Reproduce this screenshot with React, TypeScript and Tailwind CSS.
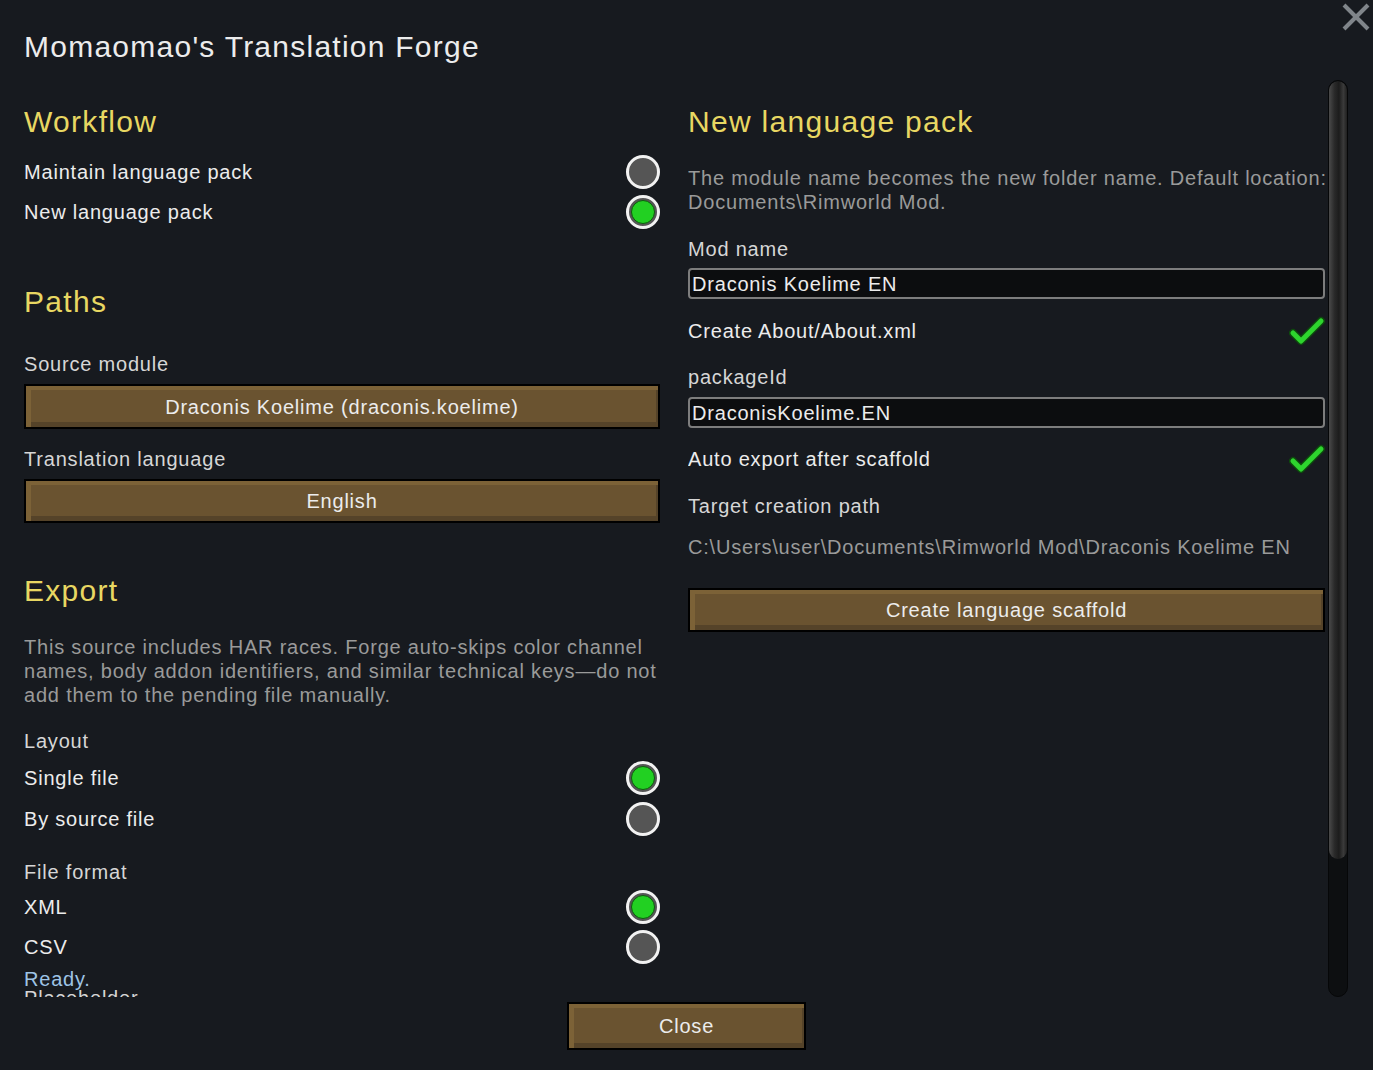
import React from "react";

const font = { fontFamily: '"Liberation Sans", Arial, sans-serif' };

function Radio({ on }: { on?: boolean }) {
  return (
    <div className="w-[34px] h-[34px] rounded-full border-[3px] border-[#f2f2f2] bg-[#555555] flex items-center justify-center shrink-0">
      {on && <div className="w-[24px] h-[24px] rounded-full bg-[#22d022] border border-[#0f5a0f]" />}
    </div>
  );
}

function Check() {
  return (
    <svg width="36" height="32" viewBox="0 0 36 32" className="shrink-0">
      <polyline points="4,18 12,26 32,6" fill="none" stroke="#0d4a0d" strokeWidth="8" strokeLinecap="round" strokeLinejoin="round" />
      <polyline points="4,18 12,26 32,6" fill="none" stroke="#2ed52e" strokeWidth="5" strokeLinecap="round" strokeLinejoin="round" />
    </svg>
  );
}

function WoodButton({ label, className = "" }: { label: string; className?: string }) {
  return (
    <div className={`shrink-0 border-2 border-black bg-[#6a5330] shadow-[inset_5px_4px_0_#7c6237,inset_-2px_-5px_0_#554329] flex items-center justify-center text-[20px] text-[#ececec] tracking-[0.8px] ${className}`}>
      {label}
    </div>
  );
}

function OptionRow({ label, on }: { label: string; on?: boolean }) {
  return (
    <div className="shrink-0 h-[40px] flex items-center justify-between text-[20px] text-[#ececec] tracking-[0.8px]">
      <span>{label}</span>
      <Radio on={on} />
    </div>
  );
}

function Heading({ children, className = "" }: { children: React.ReactNode; className?: string }) {
  return <div className={`shrink-0 h-[36px] leading-[36px] text-[30px] text-[#e8d762] tracking-[1.3px] ${className}`}>{children}</div>;
}

function Label({ children, className = "" }: { children: React.ReactNode; className?: string }) {
  return <div className={`shrink-0 h-[24px] leading-[24px] text-[20px] text-[#d6d6d6] tracking-[0.8px] ${className}`}>{children}</div>;
}

function TextInput({ value, className = "" }: { value: string; className?: string }) {
  return (
    <div className={`shrink-0 h-[31px] rounded-[4px] border-2 border-[#7d7d7d] bg-[#0c0d0f] flex items-center px-[2px] text-[20px] text-[#ececec] tracking-[0.8px] ${className}`}>
      {value}
    </div>
  );
}

export default function App() {
  return (
    <div className="w-[1373px] h-[1070px] bg-[#171a1f] relative overflow-hidden" style={font}>
      {/* close icon */}
      <svg className="absolute right-[2px] top-[2px]" width="30" height="30" viewBox="0 0 30 30">
        <line x1="3" y1="3" x2="27" y2="27" stroke="#80858a" strokeWidth="4" />
        <line x1="27" y1="3" x2="3" y2="27" stroke="#80858a" strokeWidth="4" />
      </svg>

      <div className="pl-[24px] pt-[29px] h-[80px] text-[30px] text-[#ececec] leading-[36px] tracking-[1.25px]">
        Momaomao's Translation Forge
      </div>

      <div className="flex h-[917px] pl-[24px]">
        {/* left column */}
        <div className="w-[636px] overflow-hidden flex flex-col pt-[24px]">
          <Heading>Workflow</Heading>
          <div className="mt-[12px] shrink-0">
            <OptionRow label="Maintain language pack" />
            <OptionRow label="New language pack" on />
          </div>

          <Heading className="mt-[52px]">Paths</Heading>
          <Label className="mt-[32px]">Source module</Label>
          <WoodButton label="Draconis Koelime (draconis.koelime)" className="mt-[8px] h-[45px]" />
          <Label className="mt-[18px]">Translation language</Label>
          <WoodButton label="English" className="mt-[8px] h-[44px]" />

          <Heading className="mt-[50px]">Export</Heading>
          <p className="shrink-0 mt-[26px] text-[20px] leading-[24px] text-[#9a9a9a] tracking-[0.8px]">
            This source includes HAR races. Forge auto-skips color channel names, body addon identifiers, and similar technical keys—do not add them to the pending file manually.
          </p>
          <Label className="mt-[22px]">Layout</Label>
          <div className="shrink-0 mt-[5px] flex flex-col gap-[1px]">
            <OptionRow label="Single file" on />
            <OptionRow label="By source file" />
          </div>
          <Label className="mt-[21px]">File format</Label>
          <div className="shrink-0 mt-[3px]">
            <OptionRow label="XML" on />
            <OptionRow label="CSV" />
          </div>
          <div className="shrink-0 h-[24px] leading-[24px] text-[20px] text-[#9ec4e6] tracking-[0.8px]">Ready.</div>
          <div className="shrink-0 -mt-[5px] h-[24px] leading-[24px] text-[20px] text-[#d6d6d6] tracking-[0.8px]">Placeholder</div>
        </div>

        {/* right column */}
        <div className="ml-[28px] w-[637px] flex flex-col pt-[24px] overflow-hidden">
          <Heading>New language pack</Heading>
          <p className="shrink-0 mt-[26px] text-[20px] leading-[24px] text-[#9a9a9a] tracking-[0.8px] whitespace-nowrap">
            The module name becomes the new folder name. Default location:
            <br />
            Documents\Rimworld Mod.
          </p>
          <Label className="mt-[23px]">Mod name</Label>
          <TextInput value="Draconis Koelime EN" className="mt-[7px]" />
          <div className="shrink-0 mt-[12px] h-[40px] flex items-center justify-between text-[20px] text-[#ececec] tracking-[0.8px]">
            <span>Create About/About.xml</span>
            <Check />
          </div>
          <Label className="mt-[14px]">packageId</Label>
          <TextInput value="DraconisKoelime.EN" className="mt-[8px]" />
          <div className="shrink-0 mt-[11px] h-[40px] flex items-center justify-between text-[20px] text-[#ececec] tracking-[0.8px]">
            <span>Auto export after scaffold</span>
            <Check />
          </div>
          <Label className="mt-[15px]">Target creation path</Label>
          <div className="shrink-0 mt-[17px] h-[24px] leading-[24px] text-[20px] text-[#9a9a9a] tracking-[0.8px] whitespace-nowrap">
            C:\Users\user\Documents\Rimworld Mod\Draconis Koelime EN
          </div>
          <WoodButton label="Create language scaffold" className="mt-[29px] h-[44px]" />
        </div>

        {/* scrollbar */}
        <div className="ml-[3px] w-[20px] h-[917px] rounded-full bg-[#0d0f11] border border-[#060708] overflow-hidden shrink-0">
          <div className="h-[778px] rounded-full bg-[linear-gradient(90deg,#4a4a4a_0%,#2a2a2a_30%,#1c1c1c_55%,#3a3a3a_80%,#202020_100%)]" />
        </div>
      </div>

      <div className="flex justify-center pt-[5px]">
        <WoodButton label="Close" className="w-[239px] h-[48px]" />
      </div>
    </div>
  );
}
